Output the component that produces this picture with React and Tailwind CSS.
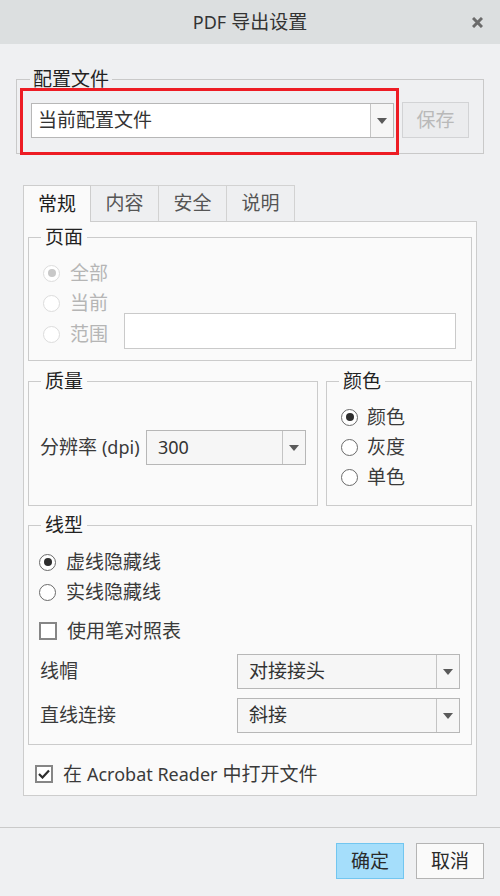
import React from "react";

const Arrow = () => (
  <svg width="10" height="6" viewBox="0 0 10 6"><path d="M0 0 L10 0 L5 6 Z" fill="#5a5a5a" /></svg>
);

function Select({ value, width, white, pl = "pl-[11px]" }) {
  return (
    <div className={`flex h-[35px] border border-[#b7b7b7] ${white ? "bg-white" : "bg-[#f6f6f6]"}`} style={{ width }}>
      <div className={`flex-1 flex items-center ${pl} text-[#333]`}>{value}</div>
      <div className="w-[23px] border-l border-[#c4c4c4] flex items-center justify-center bg-[#f6f6f6]">
        <Arrow />
      </div>
    </div>
  );
}

function Radio({ checked, disabled }) {
  return (
    <div
      className={`w-[17px] h-[17px] shrink-0 rounded-full border-[1.5px] flex items-center justify-center ${
        disabled ? "border-[#dcdcdc] bg-white" : "border-[#6a6a6a] bg-white"
      }`}
    >
      {checked && (
        <div className={`w-[8px] h-[8px] rounded-full ${disabled ? "bg-[#c8c8c8]" : "bg-[#2d2d2d]"}`} />
      )}
    </div>
  );
}

function Checkbox({ checked }) {
  return (
    <div className="w-[18px] h-[18px] shrink-0 border-2 border-[#868686] bg-white flex items-center justify-center">
      {checked && (
        <svg width="12" height="10" viewBox="0 0 12 10">
          <path d="M1 5 L4.5 8.5 L11 1.5" stroke="#2d2d2d" strokeWidth="2.2" fill="none" />
        </svg>
      )}
    </div>
  );
}

function Legend({ children }) {
  return <legend className="ml-[12px] px-[4px] leading-[20px] text-[#222]">{children}</legend>;
}

export default function App() {
  return (
    <div className="w-[500px] h-[896px] bg-[#eff0f2] flex flex-col text-[19px] text-[#3a3a3a] font-['Noto_Sans','Noto_Sans_CJK_SC',sans-serif]">
      {/* Title bar */}
      <div className="h-[44px] shrink-0 bg-[#dcdfe0] relative flex items-center justify-center">
        <span className="text-[#333]"><span className="text-[18px]">PDF</span> 导出设置</span>
        <svg className="absolute right-[17px] top-[17px]" width="11" height="11" viewBox="0 0 11 11">
          <path d="M1 1 L10 10 M10 1 L1 10" stroke="#6b6b6b" strokeWidth="3" />
        </svg>
      </div>

      {/* 配置文件 */}
      <fieldset className="mt-[25px] mx-[16px] border border-[#c9c9c9] h-[85px]">
        <legend className="ml-[13px] px-[3px] leading-[20px] text-[#222]">配置文件</legend>
        <div className="flex items-start">
          <div className="ml-[3px] mt-[-1px] w-[379px] border-[3px] border-[#ed1c24] pt-[12px] pb-[14px] pl-[8px] pr-[1px] relative z-10">
            <Select value="当前配置文件" width="363px" white pl="pl-[6px]" />
          </div>
          <div className="ml-[3px] mt-[13px] w-[67px] h-[36px] border border-[#d2d3d5] bg-[#ebecee] flex items-center justify-center text-[#b9b9b9]">
            保存
          </div>
        </div>
      </fieldset>

      {/* Tabs */}
      <div className="mt-[31px] mx-[23px] flex items-end">
        <div className="relative z-10 w-[68px] h-[37px] mb-[-1px] border border-b-0 border-[#cdcdcd] bg-[#fafafa] flex items-center justify-center text-[#1e1e1e]">
          常规
        </div>
        {["内容", "安全", "说明"].map((t) => (
          <div
            key={t}
            className="-ml-px w-[69px] h-[36px] border border-b-0 border-[#d2d2d2] bg-[#eeeff1] flex items-center justify-center text-[#555]"
          >
            {t}
          </div>
        ))}
      </div>

      {/* Panel */}
      <div className="mx-[23px] w-[454px] h-[575px] border border-[#cdcdcd] bg-[#fafafa] px-[4px] flex flex-col">
        {/* 页面 */}
        <fieldset className="mt-[5px] border border-[#cbcbcb] pb-[11px]">
          <Legend>页面</Legend>
          <div className="pt-[11px] flex flex-col">
            <div className="h-[30px] flex items-center pl-[14px] gap-[10px] text-[#b5b5b5]">
              <Radio checked disabled />
              <span>全部</span>
            </div>
            <div className="h-[30px] flex items-center pl-[14px] gap-[10px] text-[#b5b5b5]">
              <Radio disabled />
              <span>当前</span>
            </div>
            <div className="h-[36px] mt-[-5px] flex items-center pl-[14px] text-[#b5b5b5]">
              <div className="flex items-center gap-[10px] mt-[6px] w-[81px] shrink-0">
                <Radio disabled />
                <span>范围</span>
              </div>
              <div className="w-[332px] h-[36px] border border-[#cacaca] bg-white" />
            </div>
          </div>
        </fieldset>

        {/* 质量 / 颜色 */}
        <div className="mt-[10px] flex gap-[8px]">
          <fieldset className="w-[290px] h-[135px] border border-[#cbcbcb]">
            <Legend>质量</Legend>
            <div className="mt-[39px] flex items-center">
              <span className="pl-[11px] w-[117px]">分辨率 <span className="text-[18px]">(dpi)</span></span>
              <Select value={<span className="text-[18px]">300</span>} width="160px" />
            </div>
          </fieldset>
          <fieldset className="w-[146px] h-[135px] border border-[#cbcbcb]">
            <Legend>颜色</Legend>
            <div className="pt-[11px] flex flex-col">
              {[
                ["颜色", true],
                ["灰度", false],
                ["单色", false],
              ].map(([t, c]) => (
                <div key={t} className="h-[30px] flex items-center pl-[14px] gap-[9px]">
                  <Radio checked={c} />
                  <span>{t}</span>
                </div>
              ))}
            </div>
          </fieldset>
        </div>

        {/* 线型 */}
        <fieldset className="mt-[9px] border border-[#cbcbcb] pb-[11px]">
          <Legend>线型</Legend>
          <div className="pt-[12px] flex flex-col">
            <div className="h-[30px] flex items-center pl-[10px] gap-[10px]">
              <Radio checked />
              <span>虚线隐藏线</span>
            </div>
            <div className="h-[30px] flex items-center pl-[10px] gap-[10px]">
              <Radio />
              <span>实线隐藏线</span>
            </div>
            <div className="mt-[9px] h-[30px] flex items-center pl-[10px] gap-[10px]">
              <Checkbox />
              <span>使用笔对照表</span>
            </div>
            <div className="mt-[8px] flex items-center">
              <span className="pl-[11px] w-[208px]">线帽</span>
              <Select value="对接接头" width="223px" />
            </div>
            <div className="mt-[9px] flex items-center">
              <span className="pl-[11px] w-[208px]">直线连接</span>
              <Select value="斜接" width="223px" />
            </div>
          </div>
        </fieldset>

        <div className="mt-[14px] h-[30px] flex items-center pl-[7px] gap-[10px]">
          <Checkbox checked />
          <span>在 <span className="text-[18px]">Acrobat Reader</span> 中打开文件</span>
        </div>
      </div>

      {/* Footer */}
      <div className="mt-[31px] border-t border-[#cacaca] pt-[15px] pr-[16px] flex justify-end gap-[12px]">
        <div className="w-[68px] h-[36px] border border-[#72c6f0] bg-[#a5defb] flex items-center justify-center text-[#2a2a2a]">
          确定
        </div>
        <div className="w-[68px] h-[36px] border border-[#b4b4b4] bg-[#fafafa] flex items-center justify-center text-[#2a2a2a]">
          取消
        </div>
      </div>
    </div>
  );
}
